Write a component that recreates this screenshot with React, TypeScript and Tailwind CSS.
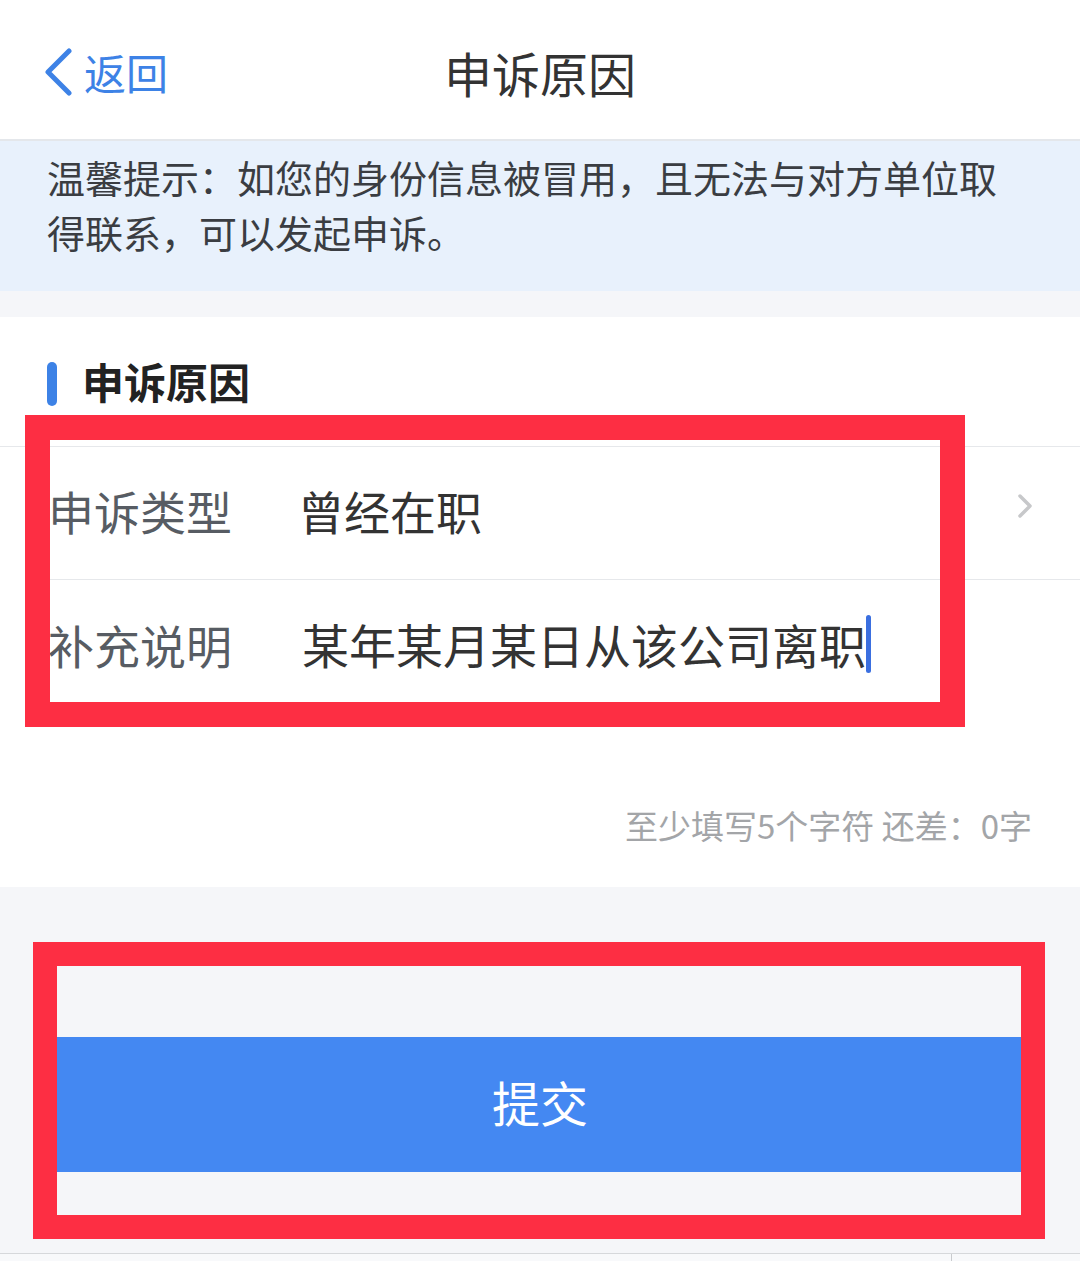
import React, { useState } from 'react';

const font = { fontFamily: '"Noto Sans CJK SC", "Noto Sans", sans-serif' };

function Row({ label, children, last }: { label: string; children: React.ReactNode; last?: boolean }) {
  return (
    <div className={`flex items-center h-[133px] ${last ? '' : 'border-b border-[#e6e8eb]'} ml-[48px]`}>
      <span className="w-[250px] shrink-0 -mt-[6px] text-[46px] leading-[60px] text-[#575c63]">{label}</span>
      {children}
    </div>
  );
}

export default function App() {
  // 补充说明的内容，已满足最少字数
  const [remark] = useState('某年某月某日从该公司离职');
  const remaining = Math.max(0, 5 - remark.length);

  return (
    <div className="relative w-[1080px] h-[1261px] overflow-hidden bg-[#f5f6f9]" style={font}>
      {/* 顶部导航 */}
      <div className="h-[141px] grid grid-cols-[1fr_auto_1fr] items-center bg-white border-b-2 border-[#e4e7eb] pt-1">
        <div className="flex items-center pl-[44px] gap-[10px] text-[#3d82e6]">
          <svg width="30" height="48" viewBox="0 0 30 48" fill="none">
            <polyline points="25,3 4,24 25,45" stroke="currentColor" strokeWidth="5" strokeLinecap="round" strokeLinejoin="round" />
          </svg>
          <span className="text-[42px] leading-[50px]">返回</span>
        </div>
        <h1 className="text-[48px] leading-[60px] text-[#333333]">申诉原因</h1>
        <div />
      </div>

      {/* 温馨提示 */}
      <div className="bg-[#e8f1fc] pl-[47px] pr-[60px] pt-[8px] pb-[32px] text-[38px] leading-[55px] text-[#3a3d42]">
        温馨提示：如您的身份信息被冒用，且无法与对方单位取得联系，可以发起申诉。
      </div>

      <div className="h-[26px]" />

      {/* 申诉原因表单 */}
      <div className="bg-white pt-[45px] pb-[42px]">
        <div className="flex items-center h-[44px] pl-[47px] gap-[25px]">
          <span className="w-[10px] h-[44px] rounded-full bg-[#3d82e6]" />
          <span className="text-[42px] leading-[44px] font-bold text-[#222222] -mt-[6px]">申诉原因</span>
        </div>
        <div className="mt-[40px] border-t border-[#e6e8eb]">
          <Row label="申诉类型">
            <span className="flex-1 -mt-[6px] text-[46px] leading-[60px] text-[#333333]">曾经在职</span>
            <svg className="mr-[46px] -mt-[14px]" width="18" height="26" viewBox="0 0 18 26" fill="none">
              <polyline points="4,3 14,13 4,23" stroke="#c7c8ca" strokeWidth="3.5" strokeLinecap="round" strokeLinejoin="round" />
            </svg>
          </Row>
          <Row label="补充说明" last>
            <span className="flex items-center -mt-[6px] pl-[4px] text-[47px] leading-[60px] text-[#333333]">
              {remark}
              <span className="inline-block w-[5px] h-[58px] rounded-full bg-[#3a6fe0]" />
            </span>
          </Row>
        </div>
        <div className="mt-[92px] pr-[48px] text-right text-[33px] leading-[40px] text-[#a3a5a8]">
          至少填写5个字符 还差：{remaining}字
        </div>
      </div>

      {/* 提交 */}
      <div className="h-[366px] pt-[150px]">
        <button className="mx-[40px] w-[1000px] h-[135px] pb-[8px] bg-[#4488f2] text-white text-[48px] leading-[60px]">
          提交
        </button>
      </div>
      <div className="flex h-[9px] border-t border-[#d6d8db] bg-[#f8f9fb]">
        <div className="w-[952px] border-r border-[#c9cbce]" />
      </div>

      {/* 红框标注 */}
      <div className="absolute left-[25px] top-[415px] w-[940px] h-[312px] border-[25px] border-[#fd2e43]" />
      <div className="absolute left-[33px] top-[942px] w-[1012px] h-[297px] border-[24px] border-[#fd2e43]" />
    </div>
  );
}
